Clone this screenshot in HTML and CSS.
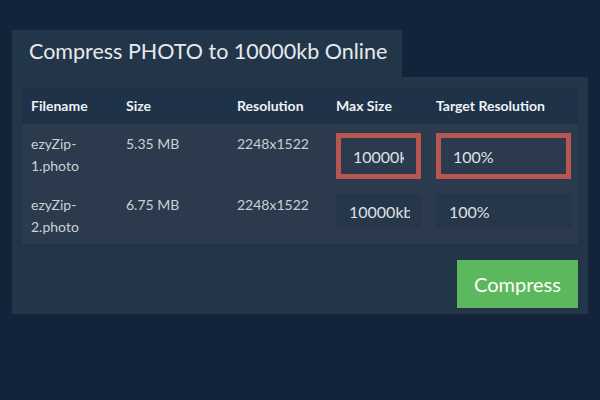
FILE: index.html
```html
<!DOCTYPE html>
<html lang="en">

<head>
    <meta charset="UTF-8">
    <meta name="viewport" content="width=device-width, initial-scale=1.0">
    <title>Compress PHOTO</title>
    <link rel="stylesheet" href="styles.css">
</head>

<body>
    <div class="wrap">
        <div class="tab">Compress PHOTO to 10000kb Online</div>
        <div class="panel">
            <table class="files">
                <thead>
                    <tr>
                        <th class="c-name">Filename</th>
                        <th class="c-size">Size</th>
                        <th class="c-res">Resolution</th>
                        <th class="c-max">Max Size</th>
                        <th class="c-target">Target Resolution</th>
                    </tr>
                </thead>
                <tbody>
                    <tr>
                        <td>ezyZip-<br>1.photo</td>
                        <td>5.35 MB</td>
                        <td>2248x1522</td>
                        <td><input type="text" class="max active" value="10000kb"></td>
                        <td><input type="text" class="target active" value="100%"></td>
                    </tr>
                    <tr>
                        <td>ezyZip-<br>2.photo</td>
                        <td>6.75 MB</td>
                        <td>2248x1522</td>
                        <td><input type="text" class="max" value="10000kb"></td>
                        <td><input type="text" class="target" value="100%"></td>
                    </tr>
                </tbody>
            </table>
            <div class="actions">
                <button class="compress">Compress</button>
            </div>
        </div>
    </div>
</body>

</html>
```

FILE: styles.css
```css
body {
    margin: 0;
    background-color: #12233a;
    font-family: Lato, "Open Sans", sans-serif;
}

.wrap {
    margin: 30px 12px 0 12px;
}

.tab {
    width: 373px;
    height: 47px;
    padding-left: 17px;
    background-color: #233649;
    color: #e6eaee;
    font-size: 21.5px;
    line-height: 42px;
}

.panel {
    background-color: #233649;
    padding: 10px 10px 6px 10px;
}

.files {
    width: 556px;
    border-collapse: collapse;
    table-layout: fixed;
    font-size: 14px;
}

.files th {
    height: 37px;
    padding: 0 9px;
    text-align: left;
    background-color: #1f3248;
    color: #eef1f4;
    font-weight: bold;
    white-space: nowrap;
}

/* widths without the 18px of padding */
.c-name { width: 77px; }
.c-size { width: 93px; }
.c-res { width: 81px; }
.c-max { width: 82px; }
.c-target { width: 133px; }

.files td {
    padding: 9px 0 6px 9px;
    vertical-align: top;
    background-color: #2b3a4c;
    color: #c9d0d7;
    line-height: 22px;
}

.files input {
    display: block;
    box-sizing: border-box;
    height: 34px;
    border: none;
    outline: none;
    padding: 0 11px 0 13px;
    background-color: #27374a;
    color: #dde2e7;
    font-family: Lato, "Open Sans", sans-serif;
    font-size: 16px;
}

.files input.max {
    width: 85px;
}

.files input.target {
    width: 136px;
}

.files input.active {
    height: 46px;
    border: 5px solid #b85652;
    padding-left: 12px;
    padding-right: 12px;
    background-color: #2b3a4c;
}

.files input.max.active {
    width: 85px;
}

.files input.target.active {
    width: 135px;
}

.actions {
    display: flex;
    justify-content: flex-end;
    margin-top: 16px;
}

.compress {
    width: 121px;
    height: 48px;
    border: none;
    background-color: #5cb85c;
    color: #ffffff;
    font-family: Lato, "Open Sans", sans-serif;
    font-size: 20px;
}
```
